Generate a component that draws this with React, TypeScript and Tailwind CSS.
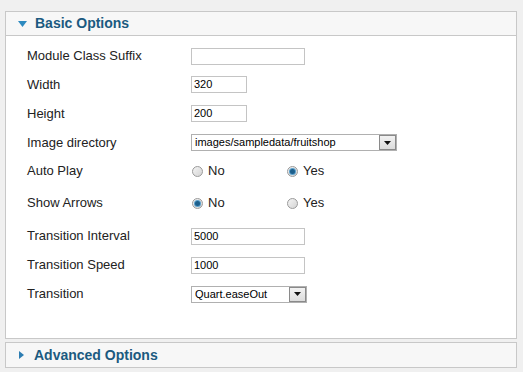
import React from 'react';

const font = "font-['Liberation_Sans',Arial,sans-serif]";

function Radio({ checked }: { checked?: boolean }) {
  return (
    <span className="relative inline-block w-[11px] h-[11px] rounded-full border border-[#9a9a9a] bg-gradient-to-br from-[#f4f4f4] to-[#d4d4d4]">
      {checked && (
        <span className="absolute left-[2px] top-[2px] w-[5px] h-[5px] rounded-full bg-[#1c5f8c] shadow-[0_0_0_1px_#5aa0cc]" />
      )}
    </span>
  );
}

function TextInput({ value, width }: { value?: string; width: string }) {
  return (
    <div className={`${width} h-[17px] border border-[#c4c4c4] bg-white text-[11px] leading-[15px] pl-[2px] text-black`}>
      {value}
    </div>
  );
}

function Select({ value, width }: { value: string; width: string }) {
  return (
    <div className={`${width} h-[17px] border border-[#b0b0b0] bg-white flex items-center text-[11px] text-black`}>
      <span className="flex-1 pl-[3px] leading-[15px]">{value}</span>
      <span className="w-[17px] h-[15px] border border-[#8a8a8a] bg-gradient-to-b from-[#f2f2f2] to-[#dcdcdc] flex items-center justify-center">
        <svg width="7" height="4" viewBox="0 0 7 4">
          <path d="M0 0h7L3.5 4z" fill="#111" />
        </svg>
      </span>
    </div>
  );
}

function Row({ label, h, children }: { label: string; h: string; children: React.ReactNode }) {
  return (
    <div className={`flex items-center ${h}`}>
      <div className="w-[164px] text-[13px] text-[#222]">{label}</div>
      {children}
    </div>
  );
}

function RadioPair({ yes }: { yes: boolean }) {
  return (
    <div className="flex items-center text-[13px] text-[#222]">
      <div className="flex items-center w-[96px] pl-[1px]">
        <Radio checked={!yes} />
        <span className="ml-[5px]">No</span>
      </div>
      <div className="flex items-center">
        <Radio checked={yes} />
        <span className="ml-[5px]">Yes</span>
      </div>
    </div>
  );
}

export default function App() {
  return (
    <div className={`${font} bg-[#f0f0f0] w-[523px] h-[372px] pt-[11px] pl-[5px]`}>
      {/* Basic Options */}
      <div className="w-[512px] border border-[#c8c8c8] bg-white">
        <div className="h-[24px] bg-[#f7f7f7] border-b border-[#c8c8c8] flex items-center pl-[12px]">
          <svg width="9" height="6" viewBox="0 0 9 6" className="mr-[8px] mt-[1px]">
            <path d="M0 0h9L4.5 6z" fill="#2d8ac0" />
          </svg>
          <span className="text-[14px] font-bold text-[#1b5a80]">Basic Options</span>
        </div>
        <div className="pl-[21px] pt-[6px] pb-[29px]">
          <Row label="Module Class Suffix" h="h-[28px]">
            <TextInput width="w-[114px]" />
          </Row>
          <Row label="Width" h="h-[29px]">
            <TextInput width="w-[56px]" value="320" />
          </Row>
          <Row label="Height" h="h-[29px]">
            <TextInput width="w-[56px]" value="200" />
          </Row>
          <Row label="Image directory" h="h-[29px]">
            <Select width="w-[206px]" value="images/sampledata/fruitshop" />
          </Row>
          <Row label="Auto Play" h="h-[28px]">
            <RadioPair yes={true} />
          </Row>
          <Row label="Show Arrows" h="h-[36px]">
            <RadioPair yes={false} />
          </Row>
          <Row label="Transition Interval" h="h-[30px]">
            <TextInput width="w-[114px]" value="5000" />
          </Row>
          <Row label="Transition Speed" h="h-[28px]">
            <TextInput width="w-[114px]" value="1000" />
          </Row>
          <Row label="Transition" h="h-[30px]">
            <Select width="w-[116px]" value="Quart.easeOut" />
          </Row>
        </div>
      </div>

      {/* Advanced Options */}
      <div className="mt-[3px] w-[512px] h-[26px] border border-[#c8c8c8] bg-[#f7f7f7] flex items-center pl-[13px]">
        <svg width="5" height="8" viewBox="0 0 5 8" className="mr-[10px]">
          <path d="M0 0l5 4-5 4z" fill="#2d7db2" />
        </svg>
        <span className="text-[14px] font-bold text-[#1b5a80]">Advanced Options</span>
      </div>
    </div>
  );
}
